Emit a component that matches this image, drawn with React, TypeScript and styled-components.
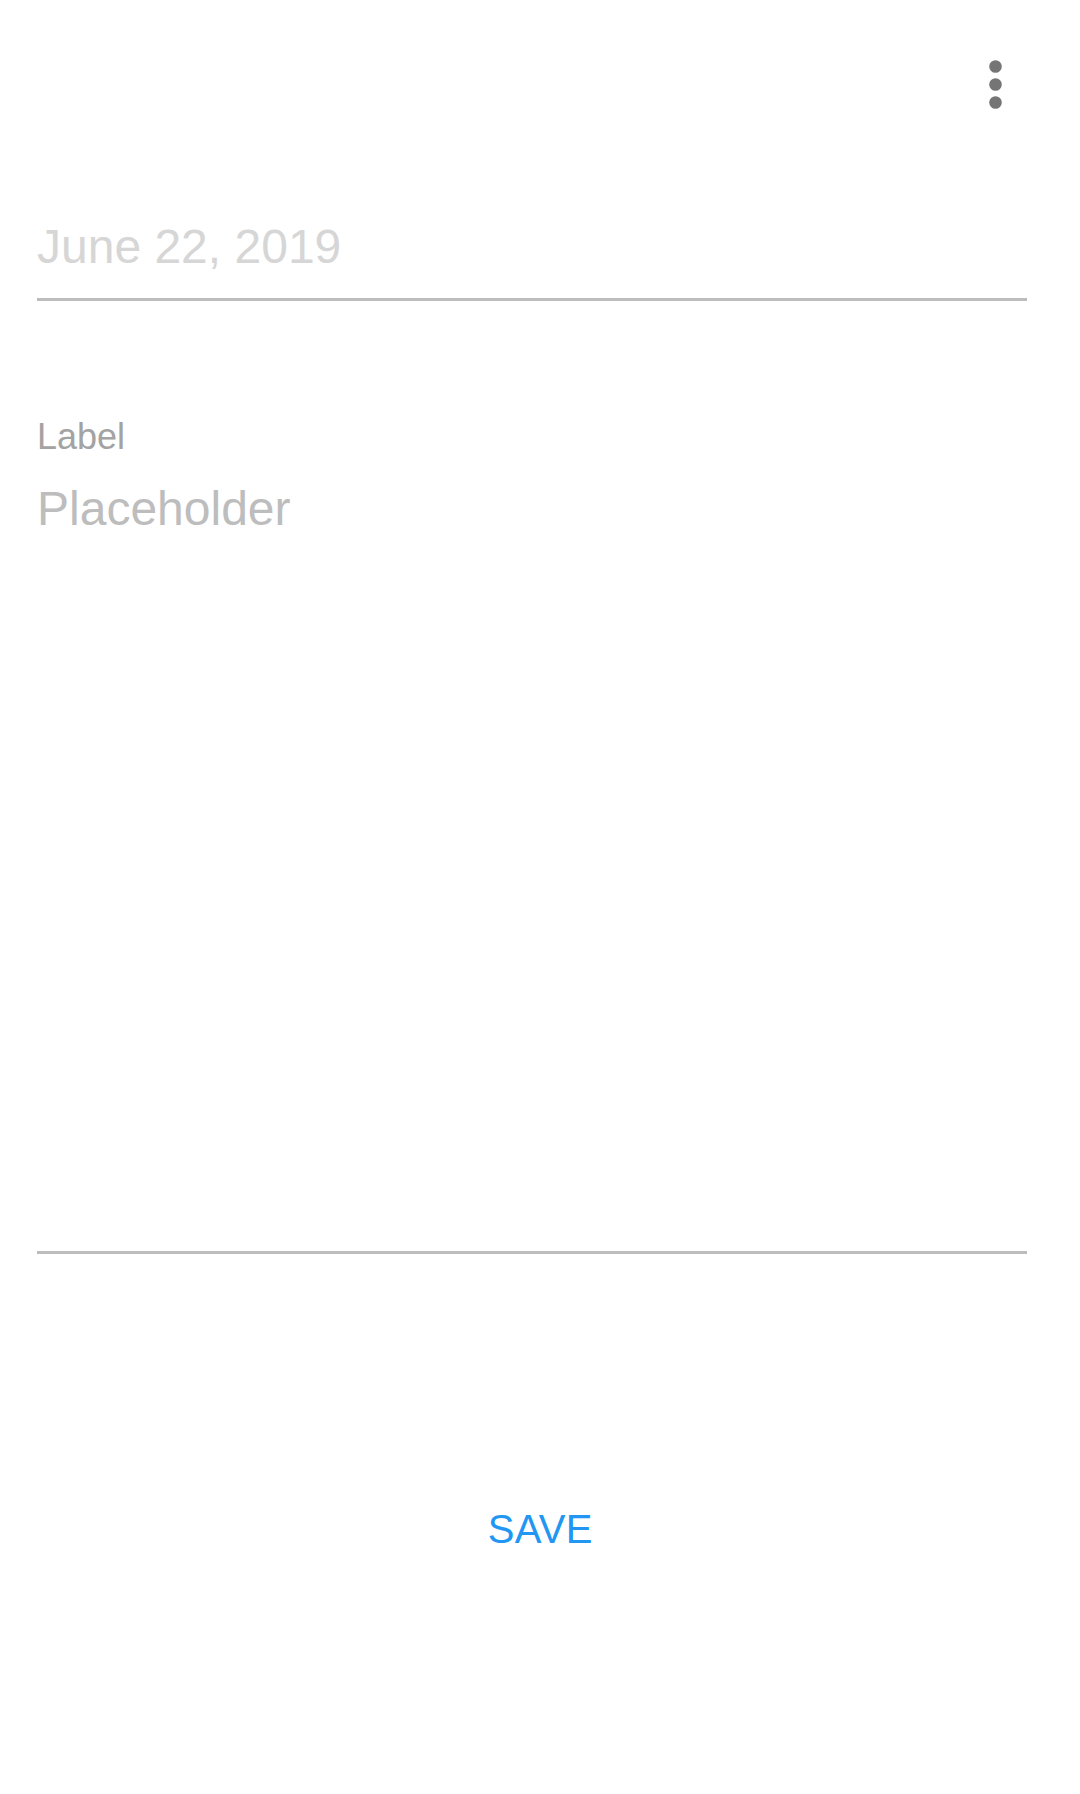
import React from "react";
import styled, { createGlobalStyle } from "styled-components";

const GlobalStyle = createGlobalStyle`
  html, body {
    margin: 0;
    padding: 0;
    background: #ffffff;
    font-family: "Liberation Sans", Arial, sans-serif;
  }
`;

const Screen = styled.div`
  width: 1080px;
  min-height: 1794px;
  background: #ffffff;
  display: flex;
  flex-direction: column;
`;

const Toolbar = styled.div`
  height: 168px;
  display: flex;
  justify-content: flex-end;
  align-items: center;
  padding-right: 53px;
`;

const IconButton = styled.button`
  width: 63px;
  height: 63px;
  padding: 0;
  border: none;
  background: transparent;
  display: flex;
  align-items: center;
  justify-content: center;
`;

const Form = styled.div`
  display: flex;
  flex-direction: column;
  padding: 0 53px 0 37px;
`;

const Field = styled.div<{ $top: number }>`
  display: flex;
  flex-direction: column;
  margin-top: ${(p) => p.$top}px;
`;

const FieldText = styled.div<{ $size: number; $color: string }>`
  font-size: ${(p) => p.$size}px;
  line-height: ${(p) => p.$size}px;
  color: ${(p) => p.$color};
  white-space: nowrap;
`;

const DateText = styled(FieldText)`
  height: 48px;
`;

const Underline = styled.div<{ $gap: number }>`
  margin-top: ${(p) => p.$gap}px;
  height: 3px;
  background: #bdbdbd;
`;

const LabelText = styled(FieldText)`
  margin-bottom: 30px;
`;

const Body = styled.div`
  min-height: 832px;
`;

const Footer = styled.div`
  display: flex;
  justify-content: center;
  padding-top: 257px;
`;

const TextButton = styled.button`
  border: none;
  background: transparent;
  padding: 0 0 0 0.3px;
  font-family: "Liberation Sans", Arial, sans-serif;
  font-size: 40px;
  line-height: 37px;
  color: #2196f3;
  letter-spacing: 0.3px;
`;

const MoreIcon = () => (
  <svg width="63" height="63" viewBox="0 0 63 63">
    <circle cx="31.5" cy="13.5" r="6.3" fill="#757575" />
    <circle cx="31.5" cy="31.5" r="6.3" fill="#757575" />
    <circle cx="31.5" cy="49.5" r="6.3" fill="#757575" />
  </svg>
);

export default function App() {
  return (
    <>
      <GlobalStyle />
      <Screen>
        <Toolbar>
          <IconButton aria-label="More options">
            <MoreIcon />
          </IconButton>
        </Toolbar>
        <Form>
          <Field $top={55}>
            <DateText $size={48} $color="#d6d6d6">
              June 22, 2019
            </DateText>
            <Underline $gap={27} />
          </Field>
          <Field $top={118}>
            <Body>
              <LabelText $size={36} $color="#a3a3a3">
                Label
              </LabelText>
              <FieldText $size={48} $color="#bdbdbd">
                Placeholder
              </FieldText>
            </Body>
            <Underline $gap={0} />
          </Field>
        </Form>
        <Footer>
          <TextButton>SAVE</TextButton>
        </Footer>
      </Screen>
    </>
  );
}
